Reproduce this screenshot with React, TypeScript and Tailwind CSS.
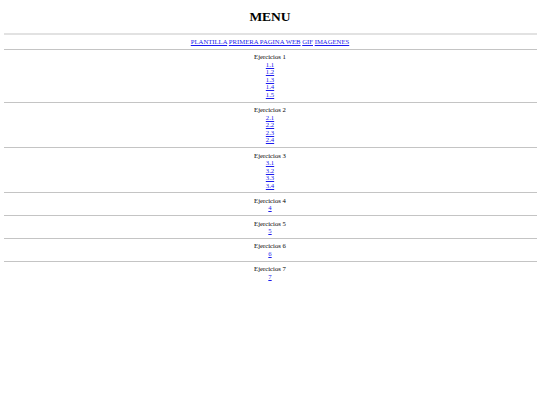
import React from 'react';

const sections = [
  { title: 'Ejercicios 1', links: ['1.1', '1.2', '1.3', '1.4', '1.5'] },
  { title: 'Ejercicios 2', links: ['2.1', '2.2', '2.3', '2.4'] },
  { title: 'Ejercicios 3', links: ['3.1', '3.2', '3.3', '3.4'] },
  { title: 'Ejercicios 4', links: ['4'] },
  { title: 'Ejercicios 5', links: ['5'] },
  { title: 'Ejercicios 6', links: ['6'] },
  { title: 'Ejercicios 7', links: ['7'] },
];

const navLinks = ['PLANTILLA', 'PRIMERA PAGINA WEB', 'GIF', 'IMAGENES'];

function Rule({ first }: { first?: boolean }) {
  return first ? (
    <div className="h-[2px] bg-[#e2e2e2]" />
  ) : (
    <div className="h-px bg-[#c4c4c4]" />
  );
}

export default function App() {
  return (
    <div className="min-h-[405px] bg-white px-[3.5px] text-center text-black font-['Liberation_Serif',serif] text-[6.7px] leading-[7.5px]">
      <h1 className="pt-[8.8px] pb-[9px] text-[13.5px] leading-[15px] font-bold">MENU</h1>
      <Rule first />
      <div className="py-[3.4px]">
        {navLinks.map((l, i) => (
          <React.Fragment key={l}>
            {i > 0 && ' '}
            <a href="#" className="text-[#1a1aee] underline">{l}</a>
          </React.Fragment>
        ))}
      </div>
      {sections.map((s) => (
        <React.Fragment key={s.title}>
          <Rule />
          <div className="py-[3.4px]">
            <div>{s.title}</div>
            {s.links.map((l) => (
              <div key={l}>
                <a href="#" className="text-[#1a1aee] underline">{l}</a>
              </div>
            ))}
          </div>
        </React.Fragment>
      ))}
    </div>
  );
}
